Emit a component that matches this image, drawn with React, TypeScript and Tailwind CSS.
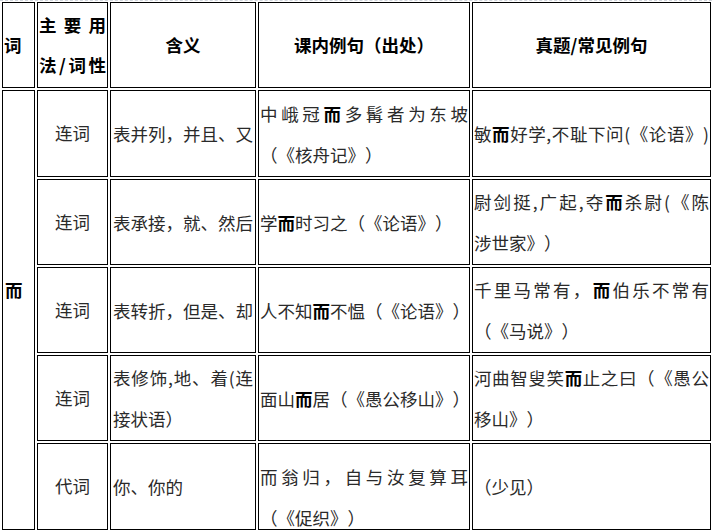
import type { ReactNode } from 'react'
import clsx from 'clsx'

type Line = { t: string; j?: boolean }

type Row = {
  pos: string
  meaning: Line[]
  textbook: Line[]
  exam: Line[]
  plainTextbook?: boolean
  textbookTop?: boolean
}

const rows: Row[] = [
  {
    pos: '连词',
    meaning: [{ t: '表并列，并且、又' }],
    textbook: [{ t: '中峨冠而多髯者为东坡', j: true }, { t: '（《核舟记》）' }],
    exam: [{ t: '敏而好学,不耻下问(《论语》)', j: true }],
  },
  {
    pos: '连词',
    meaning: [{ t: '表承接，就、然后' }],
    textbook: [{ t: '学而时习之（《论语》）' }],
    exam: [{ t: '尉剑挺,广起,夺而杀尉(《陈', j: true }, { t: '涉世家》）' }],
  },
  {
    pos: '连词',
    meaning: [{ t: '表转折，但是、却' }],
    textbook: [{ t: '人不知而不愠（《论语》）' }],
    exam: [{ t: '千里马常有，而伯乐不常有', j: true }, { t: '（《马说》）' }],
  },
  {
    pos: '连词',
    meaning: [{ t: '表修饰,地、着(连', j: true }, { t: '接状语）' }],
    textbook: [{ t: '面山而居（《愚公移山》）' }],
    exam: [{ t: '河曲智叟笑而止之曰（《愚公', j: true }, { t: '移山》）' }],
  },
  {
    pos: '代词',
    meaning: [{ t: '你、你的' }],
    textbook: [{ t: '而翁归，自与汝复算耳', j: true }, { t: '（《促织》）' }],
    exam: [{ t: '（少见）' }],
    plainTextbook: true,
    textbookTop: true,
  },
]

// bold every 而 in an example sentence
function mark(text: string, bold: boolean) {
  if (!bold) return text
  return text.split('而').flatMap((part, i) =>
    i === 0 ? [part] : [<b key={i} className="font-bold text-black">而</b>, part]
  )
}

function Cell({ children, className }: { children: ReactNode; className?: string }) {
  return (
    <div className={clsx('border border-black bg-white flex flex-col overflow-hidden', className)}>
      {children}
    </div>
  )
}

function Lines({ lines, bold = true }: { lines: Line[]; bold?: boolean }) {
  return (
    <>
      {lines.map((l, i) => (
        <div
          key={i}
          className={clsx('leading-[41px]', l.j ? 'text-justify [text-align-last:justify]' : 'whitespace-nowrap')}
        >
          {mark(l.t, bold)}
        </div>
      ))}
    </>
  )
}

export default function App() {
  return (
    <div
      lang="zh-CN"
      className="h-[531px] w-[712px] overflow-hidden bg-white border-t border-dashed border-gray-300 pt-[1px] pl-[2px] font-['Noto_Sans_CJK_SC',sans-serif] text-[17.5px] text-[#2a2a2a] [text-spacing-trim:space-all]"
    >
      <div className="grid grid-cols-[33px_71px_146px_212px_239px] grid-rows-[86px_87px_86px_86px_86px_87px] gap-[2px]">
        {/* Header */}
        <Cell className="justify-center pl-[1px] font-bold text-black">词</Cell>
        <Cell className="justify-center px-[1px] font-bold text-black leading-[40px]">
          <div className="text-justify [text-align-last:justify]">主 要 用</div>
          <div className="text-justify [text-align-last:justify]">法/词性</div>
        </Cell>
        <Cell className="items-center justify-center font-bold text-black">含义</Cell>
        <Cell className="items-center justify-center font-bold text-black">课内例句（出处）</Cell>
        <Cell className="items-center justify-center font-bold text-black">真题/常见例句</Cell>

        <Cell className="row-span-5 justify-center pb-[40px] pl-[2px] font-bold text-black">而</Cell>

        {rows.map((r, i) => (
          <div key={i} className="contents">
            <Cell className="items-center justify-center">{r.pos}</Cell>
            <Cell className="justify-center px-[2px]">
              <Lines lines={r.meaning} bold={false} />
            </Cell>
            <Cell className={clsx('px-[1px]', r.textbookTop ? 'justify-start pt-[12px]' : 'justify-center')}>
              <Lines lines={r.textbook} bold={!r.plainTextbook} />
            </Cell>
            <Cell className="justify-center px-[1px]">
              <Lines lines={r.exam} />
            </Cell>
          </div>
        ))}
      </div>
    </div>
  )
}
